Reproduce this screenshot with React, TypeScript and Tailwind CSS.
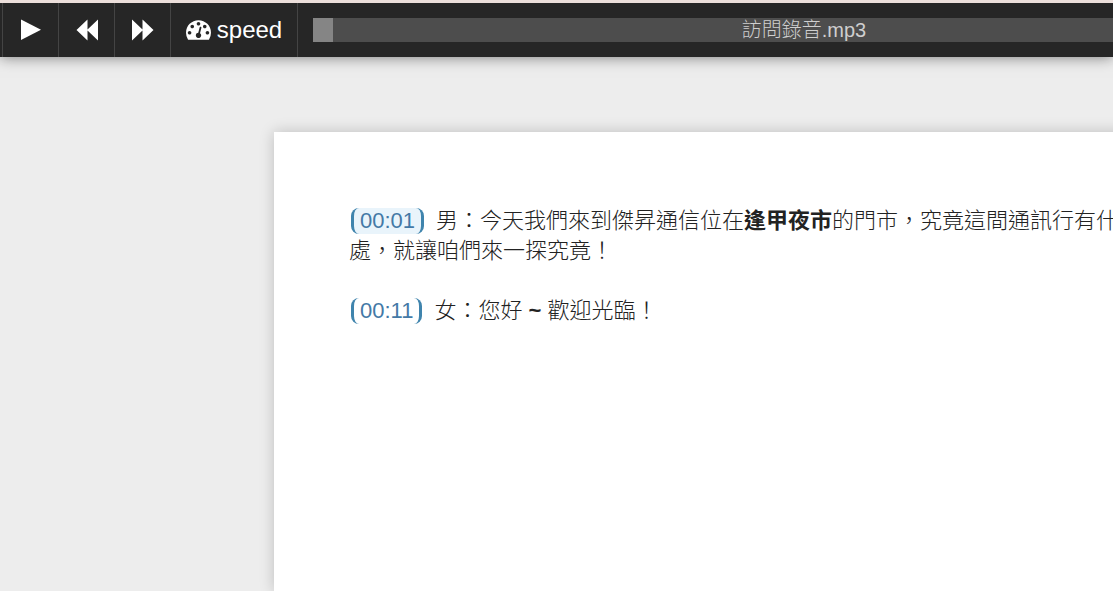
import { useState, ReactNode } from 'react';
import clsx from 'clsx';

interface ToolButtonProps {
  label: string;
  onClick?: () => void;
  children: ReactNode;
}

const ToolButton = ({ label, onClick, children }: ToolButtonProps) => (
  <button
    type="button"
    aria-label={label}
    onClick={onClick}
    className="flex w-14 shrink-0 items-center justify-center border-l border-[#444444] hover:bg-[#333333]"
  >
    {children}
  </button>
);

interface TimestampProps {
  time: string;
  active?: boolean;
  onSeek: (time: string) => void;
}

const Timestamp = ({ time, active = false, onSeek }: TimestampProps) => (
  <button
    type="button"
    onClick={() => onSeek(time)}
    className={clsx(
      'mr-3 ml-0.5 inline-block h-[26px] rounded-lg border-x-3 border-[#3f84ad] px-1.5 leading-[26px] text-[#4479a6]',
      active && 'bg-[#e9f4fb]'
    )}
  >
    {time}
  </button>
);

const PlayIcon = () => (
  <svg width="22" height="22" viewBox="0 0 22 22" fill="currentColor" aria-hidden="true">
    <path d="M1 0.5v20.6L21 10.8z" />
  </svg>
);

const BackwardIcon = () => (
  <svg width="22" height="22" viewBox="0 0 22 22" fill="currentColor" aria-hidden="true">
    <path d="M0.5 11L11.500 .5v10L22 .5v21l-10.500-10v10z" />
  </svg>
);

const ForwardIcon = () => (
  <svg width="22" height="22" viewBox="0 0 22 22" fill="currentColor" aria-hidden="true">
    <path d="M21.500 11L10.500 .5v10L0 .5v21l10.500-10v10z" />
  </svg>
);

const SpeedIcon = () => (
  <svg width="25" height="20" viewBox="0 256 1792 1408" fill="currentColor" aria-hidden="true">
    <path d="M384 1152q0-53-37.500-90.500t-90.500-37.500-90.500 37.500-37.500 90.500 37.500 90.500 90.500 37.500 90.500-37.500 37.500-90.500zm192-448q0-53-37.500-90.500t-90.500-37.500-90.500 37.500-37.500 90.500 37.500 90.500 90.500 37.500 90.500-37.500 37.500-90.500zm428 481l101-382q6-26-7.500-48.500t-38.500-29.500-48 6.500-30 39.500l-101 382q-60 5-107 43.500t-63 98.500q-20 77 20 146t117 89 146-20 89-117q16-60-6-117t-72-91zm660-33q0-53-37.500-90.500t-90.500-37.500-90.500 37.500-37.500 90.500 37.500 90.500 90.500 37.500 90.500-37.500 37.500-90.500zm-640-640q0-53-37.500-90.500t-90.500-37.500-90.500 37.500-37.500 90.500 37.500 90.500 90.500 37.500 90.500-37.500 37.500-90.500zm448 192q0-53-37.500-90.500t-90.500-37.500-90.500 37.500-37.500 90.500 37.500 90.500 90.500 37.500 90.500-37.500 37.500-90.500zm320 448q0 261-141 483-19 29-54 29h-1402q-35 0-54-29-141-221-141-483 0-182 71-348t191-286 286-191 348-71 348 71 286 191 191 286 71 348z" />
  </svg>
);

const App = () => {
  const [current, setCurrent] = useState('00:01');

  return (
    <div className="flex min-h-screen flex-col overflow-hidden border-t-3 border-[#ecdfdb] bg-[#ededed] font-['Liberation_Sans','Noto_Sans_CJK_TC',sans-serif]">
      <header className="relative flex h-[54px] bg-[#262626] pl-0.5 text-white shadow-[0_0_14px_rgba(0,0,0,0.5)]">
        <ToolButton label="play">
          <PlayIcon />
        </ToolButton>
        <ToolButton label="rewind" onClick={() => setCurrent('00:01')}>
          <BackwardIcon />
        </ToolButton>
        <ToolButton label="forward" onClick={() => setCurrent('00:11')}>
          <ForwardIcon />
        </ToolButton>
        <button
          type="button"
          className="flex w-[127px] shrink-0 items-center justify-center gap-1.5 border-l border-[#444444] text-2xl hover:bg-[#333333]"
        >
          <SpeedIcon />
          speed
        </button>

        {/* player track, runs on past the edge of narrow windows */}
        <div className="flex shrink-0 items-center border-l border-[#444444] pl-[15px]">
          <div className="grid h-6 w-[982px] items-center bg-[#4d4d4d]">
            <div className="col-start-1 row-start-1 h-6 w-5 bg-[#858585]" />
            <span className="col-start-1 row-start-1 text-center text-xl leading-6 font-light text-[#cfcfcf]">
              訪問錄音.mp3
            </span>
          </div>
        </div>
      </header>

      <main className="flex flex-1 pt-[75px] pl-[274px]">
        <article
          lang="zh-Hant"
          className="w-[1020px] shrink-0 bg-white px-[75px] py-[74px] text-[22px] leading-[30px] font-light text-[#222222] shadow-[0_0_14px_rgba(0,0,0,0.2)]"
        >
          <p className="mb-[30px]">
            <Timestamp time="00:01" active={current === '00:01'} onSeek={setCurrent} />
            男：今天我們來到傑昇通信位在<b className="font-bold">逢甲夜市</b>的門市，究竟這間通訊行有什麼過人之
            <br />
            處，就讓咱們來一探究竟！
          </p>
          <p>
            <Timestamp time="00:11" active={current === '00:11'} onSeek={setCurrent} />
            女：您好 <b className="font-bold">~</b> 歡迎光臨！
          </p>
        </article>
      </main>
    </div>
  );
};

export default App;
